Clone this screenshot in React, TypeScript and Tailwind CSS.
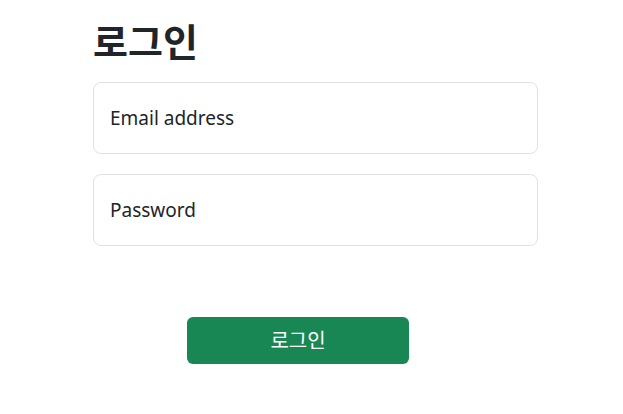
export default function App() {
  return (
    <div
      className="min-h-screen bg-white text-[#212529]"
      style={{ fontFamily: '"Noto Sans", "Noto Sans CJK KR", sans-serif' }}
    >
      <div className="ml-[93px] w-[445px] pt-[15px]">
        <h1 className="text-[38px] font-bold leading-[52px] mb-[15px]">로그인</h1>
        <div className="flex flex-col gap-[20px]">
          <div className="h-[72px] rounded-[8px] border border-[#dee2e6] flex items-center px-[16px] text-[19px]">
            Email address
          </div>
          <div className="h-[72px] rounded-[8px] border border-[#dee2e6] flex items-center px-[16px] text-[19px]">
            Password
          </div>
        </div>
        <button className="mt-[71px] ml-[94px] w-[222px] h-[47px] rounded-[6px] bg-[#198754] text-white text-[20px]">
          로그인
        </button>
      </div>
    </div>
  )
}
